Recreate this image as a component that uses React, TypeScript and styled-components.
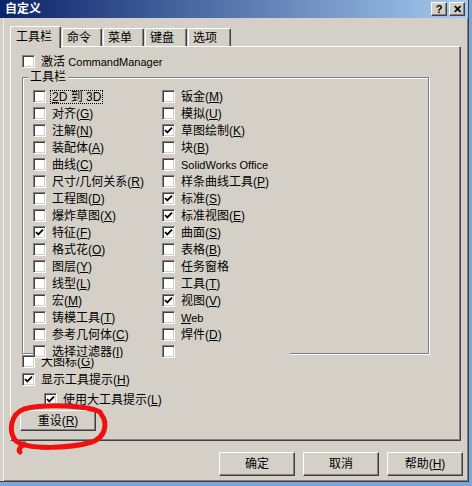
import React from 'react';
import styled, { createGlobalStyle } from 'styled-components';

const GlobalStyle = createGlobalStyle`
  body {
    margin: 0;
    background: #7aa6dc;
    font-family: "Liberation Sans", "Noto Sans CJK SC", sans-serif;
    font-size: 12px;
    color: #000;
  }
`;

const Window = styled.div`
  position: relative;
  width: 469px;
  height: 482px;
  box-sizing: border-box;
  background: #d4d0c8;
  border-right: 1px solid #404040;
  border-bottom: 1px solid #404040;
  box-shadow: inset -1px -1px #808080;
  display: flex;
  flex-direction: column;
`;

const TitleBar = styled.div`
  height: 18px;
  display: flex;
  align-items: center;
  padding: 0 3px 0 5px;
  background: linear-gradient(to right, #0a246a, #a6caf0);
  color: #fff;
  font-weight: bold;
  font-size: 12px;
`;

const TitleText = styled.div`
  flex: 1;
  line-height: 12px;
`;

const CaptionButton = styled.div`
  width: 14px;
  height: 12px;
  margin-left: 2px;
  background: #d4d0c8;
  border: 1px solid;
  border-color: #fff #404040 #404040 #fff;
  box-shadow: inset -1px -1px #808080;
  display: flex;
  align-items: center;
  justify-content: center;
  color: #000;
  font-family: "Liberation Sans", sans-serif;
  font-size: 11px;
  font-weight: bold;
  line-height: 11px;
`;

const Body = styled.div`
  flex: 1;
  padding-left: 10px;
  box-shadow: inset 3px 0 #d4d0c8, inset 4px 0 #f2f1ee;
`;

const TabStrip = styled.div`
  display: flex;
  align-items: flex-end;
  height: 20px;
  margin-top: 8px;
`;

const Tab = styled.div<{ $active?: boolean; $w: number }>`
  position: relative;
  z-index: ${p => (p.$active ? 2 : 0)};
  width: ${p => p.$w}px;
  height: ${p => (p.$active ? 22 : 18)}px;
  margin-bottom: ${p => (p.$active ? -2 : 0)}px;
  margin-left: ${p => (p.$active ? 0 : 1)}px;
  box-sizing: border-box;
  padding: ${p => (p.$active ? '4px 0 0 5px' : '3px 0 0 4px')};
  background: #d4d0c8;
  border-top: 1px solid #fff;
  border-left: 1px solid #fff;
  border-right: 1px solid #404040;
  border-radius: 2px 2px 0 0;
  box-shadow: inset -1px 0 #808080;
  line-height: 12px;
  white-space: nowrap;
`;

const Panel = styled.div`
  position: relative;
  width: 451px;
  height: 395px;
  box-sizing: border-box;
  border: 1px solid;
  border-color: #fff #404040 #404040 #fff;
  box-shadow: inset -1px -1px #808080;
  display: flex;
  flex-direction: column;
  align-items: flex-start;
`;

const CheckRow = styled.div<{ $top: number; $left: number }>`
  display: flex;
  align-items: center;
  height: 13px;
  margin: ${p => p.$top}px 0 0 ${p => p.$left}px;
  white-space: nowrap;
`;

const Box = styled.span`
  flex: none;
  width: 13px;
  height: 13px;
  box-sizing: border-box;
  background: #fff;
  border: 1px solid;
  border-color: #808080 #fff #fff #808080;
  box-shadow: inset 1px 1px #404040, inset -1px -1px #d4d0c8;
  display: flex;
  align-items: center;
  justify-content: center;
`;

const Label = styled.span<{ $focus?: boolean }>`
  margin-left: 5px;
  padding: 0 1px;
  line-height: 12px;
  outline: ${p => (p.$focus ? '1px dotted #000' : 'none')};
  outline-offset: 0;
`;

const Latin = styled.span`
  font-size: 11px;
`;

const GroupBox = styled.div`
  position: relative;
  width: 407px;
  height: 277px;
  box-sizing: border-box;
  margin: 9px 0 0 11px;
  border: 1px solid #808080;
  box-shadow: inset 1px 1px #fff, 1px 1px #fff;
`;

const GroupLabel = styled.span`
  position: absolute;
  left: 5px;
  top: -7px;
  padding: 0 2px;
  background: #d4d0c8;
  line-height: 12px;
`;

const ToolbarList = styled.div`
  position: relative;
  z-index: 1;
  width: 257px;
  height: 270px;
  margin: 10px 0 0 10px;
  overflow: hidden;
  background: #d4d0c8;
  display: grid;
  grid-template-columns: 129px 128px;
  grid-template-rows: repeat(16, 17px);
  grid-auto-flow: column;
`;

const ListRow = styled.div`
  display: flex;
  align-items: center;
  height: 17px;
  white-space: nowrap;
`;

const PushButton = styled.button<{ $w: number; $h: number }>`
  width: ${p => p.$w}px;
  height: ${p => p.$h}px;
  padding: 0;
  background: #d4d0c8;
  border: 1px solid;
  border-color: #fff #404040 #404040 #fff;
  box-shadow: inset -1px -1px #808080;
  font-family: inherit;
  font-size: 12px;
  color: #000;
  line-height: 12px;
`;

const ResetButton = styled(PushButton)`
  margin: 4px 0 0 9px;
`;

const Footer = styled.div`
  display: flex;
  justify-content: flex-end;
  gap: 8px;
  margin-top: 11px;
  padding-right: 5px;
`;

const Scribble = styled.svg`
  position: absolute;
  left: 0;
  top: 390px;
  pointer-events: none;
`;

type Item = {
  text: string;
  hotkey?: string;
  first?: boolean;
  latin?: boolean;
  checked?: boolean;
  focus?: boolean;
};

const toolbars: Item[] = [
  { text: '2D 到 3D', first: true, focus: true },
  { text: '对齐', hotkey: 'G' },
  { text: '注解', hotkey: 'N' },
  { text: '装配体', hotkey: 'A' },
  { text: '曲线', hotkey: 'C' },
  { text: '尺寸/几何关系', hotkey: 'R' },
  { text: '工程图', hotkey: 'D' },
  { text: '爆炸草图', hotkey: 'X' },
  { text: '特征', hotkey: 'F', checked: true },
  { text: '格式花', hotkey: 'O' },
  { text: '图层', hotkey: 'Y' },
  { text: '线型', hotkey: 'L' },
  { text: '宏', hotkey: 'M' },
  { text: '铸模工具', hotkey: 'T' },
  { text: '参考几何体', hotkey: 'C' },
  { text: '选择过滤器', hotkey: 'I' },
  { text: '钣金', hotkey: 'M' },
  { text: '模拟', hotkey: 'U' },
  { text: '草图绘制', hotkey: 'K', checked: true },
  { text: '块', hotkey: 'B' },
  { text: 'SolidWorks Office', latin: true },
  { text: '样条曲线工具', hotkey: 'P' },
  { text: '标准', hotkey: 'S', checked: true },
  { text: '标准视图', hotkey: 'E', checked: true },
  { text: '曲面', hotkey: 'S', checked: true },
  { text: '表格', hotkey: 'B' },
  { text: '任务窗格' },
  { text: '工具', hotkey: 'T' },
  { text: '视图', hotkey: 'V', checked: true },
  { text: 'Web', first: true, latin: true },
  { text: '焊件', hotkey: 'D' },
  { text: '' },
];

const CheckMark = () => (
  <svg width="9" height="9" viewBox="0 0 9 9">
    <path d="M1 4 L3.3 6.4 L8 1.6" fill="none" stroke="#000" strokeWidth="1.8" />
  </svg>
);

const Check = ({ on }: { on?: boolean }) => <Box>{on && <CheckMark />}</Box>;

const Caption = ({ item }: { item: Item }) => {
  let body: React.ReactNode = item.text;
  if (item.first) {
    body = (
      <>
        <u>{item.text[0]}</u>
        {item.text.slice(1)}
      </>
    );
  } else if (item.hotkey) {
    body = (
      <>
        {item.text}(<u>{item.hotkey}</u>)
      </>
    );
  }
  return item.latin ? <Latin>{body}</Latin> : <>{body}</>;
};

const tabs = [
  { label: '工具栏', w: 51, active: true },
  { label: '命令', w: 40 },
  { label: '菜单', w: 41 },
  { label: '键盘', w: 42 },
  { label: '选项', w: 43 },
];

const App = () => (
  <>
    <GlobalStyle />
    <Window>
      <TitleBar>
        <TitleText>自定义</TitleText>
        <CaptionButton>?</CaptionButton>
        <CaptionButton>✕</CaptionButton>
      </TitleBar>
      <Body>
        <TabStrip>
          {tabs.map(t => (
            <Tab key={t.label} $active={t.active} $w={t.w}>
              {t.label}
            </Tab>
          ))}
        </TabStrip>
        <Panel>
          <CheckRow $top={8} $left={11}>
            <Check />
            <Label>
              激活 <Latin>CommandManager</Latin>
            </Label>
          </CheckRow>
          <GroupBox>
            <GroupLabel>工具栏</GroupLabel>
            <ToolbarList>
              {toolbars.map((item, i) => (
                <ListRow key={i}>
                  <Check on={item.checked} />
                  {item.text && (
                    <Label $focus={item.focus}>
                      <Caption item={item} />
                    </Label>
                  )}
                </ListRow>
              ))}
            </ToolbarList>
          </GroupBox>
          <CheckRow $top={1} $left={11}>
            <Check />
            <Label>
              大图标(<u>G</u>)
            </Label>
          </CheckRow>
          <CheckRow $top={5} $left={11}>
            <Check on />
            <Label>
              显示工具提示(<u>H</u>)
            </Label>
          </CheckRow>
          <CheckRow $top={7} $left={33}>
            <Check on />
            <Label>
              使用大工具提示(<u>L</u>)
            </Label>
          </CheckRow>
          <ResetButton $w={76} $h={21}>
            重设(<u>R</u>)
          </ResetButton>
        </Panel>
        <Footer>
          <PushButton $w={76} $h={24}>确定</PushButton>
          <PushButton $w={76} $h={24}>取消</PushButton>
          <PushButton $w={76} $h={24}>
            帮助(<u>H</u>)
          </PushButton>
        </Footer>
      </Body>
      <Scribble width="120" height="72" viewBox="0 0 120 72">
        <path
          d="M100 22 C86 15 44 14 24 19 C11 24 8 40 15 50 C26 61 72 58 92 52 C106 47 108 33 101 24 M24 54 C20 57 18 60 20 62"
          fill="none"
          stroke="#f01010"
          strokeWidth="5"
          strokeLinecap="round"
        />
      </Scribble>
    </Window>
  </>
);

export default App;
